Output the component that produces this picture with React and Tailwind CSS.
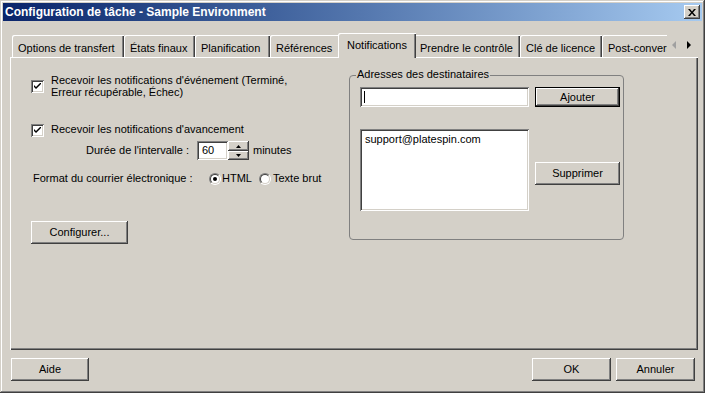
import React from 'react';

// bevel presets, Win2000 look
const raised =
  'bg-[#d4d0c8] shadow-[inset_-1px_-1px_#404040,inset_1px_1px_#fff,inset_-2px_-2px_#808080,inset_2px_2px_#d4d0c8]';
const sunken =
  'bg-white shadow-[inset_1px_1px_#808080,inset_-1px_-1px_#fff,inset_2px_2px_#404040,inset_-2px_-2px_#d4d0c8]';

const Button = ({ children, className = '', isDefault = false }) => (
  <div
    className={
      'flex items-center justify-center text-[11px] leading-none text-black ' +
      (isDefault
        ? 'bg-[#d4d0c8] border border-black shadow-[inset_-1px_-1px_#404040,inset_1px_1px_#fff,inset_-2px_-2px_#808080] '
        : raised + ' ') +
      className
    }
  >
    {children}
  </div>
);

const CheckBox = () => (
  <div className={'w-[13px] h-[13px] shrink-0 flex items-center justify-center ' + sunken}>
    <svg width="7" height="7" viewBox="0 0 7 7">
      <path d="M0 2 L0 4 L2 6 L7 1 L7 -1 L2 4 Z" fill="#000" />
    </svg>
  </div>
);

const Radio = ({ checked }) => (
  <div className="w-[12px] h-[12px] shrink-0 rounded-full border border-t-[#808080] border-l-[#808080] border-b-white border-r-white">
    <div className="w-full h-full rounded-full bg-white border border-t-[#404040] border-l-[#404040] border-b-[#d4d0c8] border-r-[#d4d0c8] flex items-center justify-center">
      {checked && <div className="w-[4px] h-[4px] rounded-full bg-black" />}
    </div>
  </div>
);

const tabs = [
  { label: 'Options de transfert', w: 'w-[112px]' },
  { label: 'États finaux', w: 'w-[71px]' },
  { label: 'Planification', w: 'w-[75px]' },
  { label: 'Références', w: 'w-[70px]' },
  { label: 'Notifications', w: 'w-[78px]', active: true },
  { label: 'Prendre le contrôle', w: 'w-[106px]' },
  { label: 'Clé de licence', w: 'w-[82px]' },
  { label: 'Post-conversion', w: 'w-[90px]' },
];

const Tab = ({ label, w, active }) =>
  active ? (
    <div
      className={
        w +
        ' relative z-10 -mx-[2px] h-[25px] shrink-0 pt-[4px] text-center bg-[#d4d0c8] rounded-tl-[2px] shadow-[inset_1px_1px_#fff,inset_-1px_0_#404040,inset_-2px_0_#808080]'
      }
    >
      {label}
    </div>
  ) : (
    <div
      className={
        w +
        ' h-[23px] shrink-0 pt-[5px] pl-[6px] whitespace-nowrap bg-[#d4d0c8] rounded-tl-[2px] shadow-[inset_1px_1px_#fff,inset_-1px_0_#404040,inset_-2px_0_#808080]'
      }
    >
      {label}
    </div>
  );

export default function App() {
  return (
    <div className="w-[705px] h-[393px] p-[3px] flex flex-col bg-[#d4d0c8] font-['Liberation_Sans',Arial,sans-serif] text-[11px] text-black shadow-[inset_-1px_-1px_#404040,inset_1px_1px_#d4d0c8,inset_-2px_-2px_#808080,inset_2px_2px_#fff] overflow-hidden">
      {/* title bar */}
      <div className="h-[18px] flex items-center justify-between pl-[2px] pr-[2px] bg-gradient-to-r from-[#0a246a] to-[#a6caf0]">
        <span className="text-white font-bold text-[12px]">
          Configuration de tâche - Sample Environment
        </span>
        <div className={'w-[16px] h-[14px] flex items-center justify-center ' + raised}>
          <svg width="8" height="7" viewBox="0 0 8 7">
            <path d="M0 0h2l2 2.5L6 0h2L5 3.5 8 7H6L4 4.5 2 7H0l3-3.5z" fill="#000" />
          </svg>
        </div>
      </div>

      {/* body */}
      <div className="flex flex-col pl-[7px] pr-[1px]">
        {/* tab strip */}
        <div className="mt-[12px] h-[25px] flex items-end">
          <div className="w-[657px] h-[25px] pl-[2px] flex items-end overflow-hidden">
            {tabs.map((t) => (
              <Tab key={t.label} {...t} />
            ))}
          </div>
          <div className="h-[24px] flex items-center gap-[10px] pl-[5px] pb-[2px]">
            <svg width="5" height="8" viewBox="0 0 5 8">
              <path d="M4 0v8L0 4z" fill="#a0a0a0" />
            </svg>
            <svg width="5" height="8" viewBox="0 0 5 8">
              <path d="M0 0v8l4-4z" fill="#000" />
            </svg>
          </div>
        </div>

        {/* panel */}
        <div className="-mt-[1px] w-[688px] h-[293px] flex shadow-[inset_1px_1px_#fff,inset_-1px_-1px_#404040,inset_-2px_-2px_#808080]">
          {/* left column */}
          <div className="w-[339px] pl-[21px] pt-[17px] flex flex-col">
            <div className="flex items-center gap-[7px]">
              <CheckBox />
              <div className="leading-[12px]">
                Recevoir les notifications d'événement (Terminé,
                <br />
                Erreur récupérable, Échec)
              </div>
            </div>

            <div className="mt-[26px] flex items-center gap-[7px]">
              <CheckBox />
              <span className="leading-[13px] -mt-[2px]">Recevoir les notifications d'avancement</span>
            </div>

            <div className="mt-[4px] h-[19px] flex items-center">
              <span className="w-[166px] pl-[55px] shrink-0">Durée de l'intervalle :</span>
              <div className={'w-[31px] h-[19px] pl-[5px] flex items-center ' + sunken}>60</div>
              <div className="w-[21px] h-[19px] flex flex-col">
                <div className={'h-[10px] flex items-center justify-center ' + raised}>
                  <svg width="5" height="3" viewBox="0 0 5 3">
                    <path d="M0 3h5L2.5 0z" fill="#000" />
                  </svg>
                </div>
                <div className={'h-[9px] flex items-center justify-center ' + raised}>
                  <svg width="5" height="3" viewBox="0 0 5 3">
                    <path d="M0 0h5L2.5 3z" fill="#000" />
                  </svg>
                </div>
              </div>
              <span className="ml-[4px]">minutes</span>
            </div>

            <div className="mt-[12px] h-[13px] flex items-center">
              <span className="w-[178px] pl-[2px] shrink-0">Format du courrier électronique :</span>
              <Radio checked />
              <span className="w-[38px] pl-[1px]">HTML</span>
              <Radio />
              <span className="pl-[2px]">Texte brut</span>
            </div>

            <Button className="mt-[36px] w-[97px] h-[23px]">Configurer...</Button>
          </div>

          {/* recipients group */}
          <div className="mt-[18px] w-[275px] h-[165px] relative border border-[#808080] rounded-[4px] pl-[10px] pt-[11px]">
            <span className="absolute -top-[8px] left-[6px] px-[1px] bg-[#d4d0c8] leading-[13px]">
              Adresses des destinataires
            </span>
            <div className="flex gap-[6px]">
              <div className={'w-[169px] h-[20px] flex items-center pl-[4px] ' + sunken}>
                <div className="w-[1px] h-[12px] bg-black" />
              </div>
              <Button isDefault className="w-[85px] h-[20px]">
                Ajouter
              </Button>
            </div>
            <div className="mt-[22px] flex gap-[6px]">
              <div className={'w-[169px] h-[82px] pl-[5px] pt-[4px] leading-[13px] ' + sunken}>
                support@platespin.com
              </div>
              <Button className="mt-[33px] w-[85px] h-[23px]">Supprimer</Button>
            </div>
          </div>
        </div>

        {/* bottom buttons */}
        <div className="mt-[8px] flex items-center pl-[1px] pr-[6px]">
          <Button className="w-[78px] h-[23px]">Aide</Button>
          <div className="flex-1" />
          <Button className="w-[79px] h-[23px]">OK</Button>
          <Button className="ml-[5px] w-[79px] h-[23px]">Annuler</Button>
        </div>
      </div>
    </div>
  );
}
